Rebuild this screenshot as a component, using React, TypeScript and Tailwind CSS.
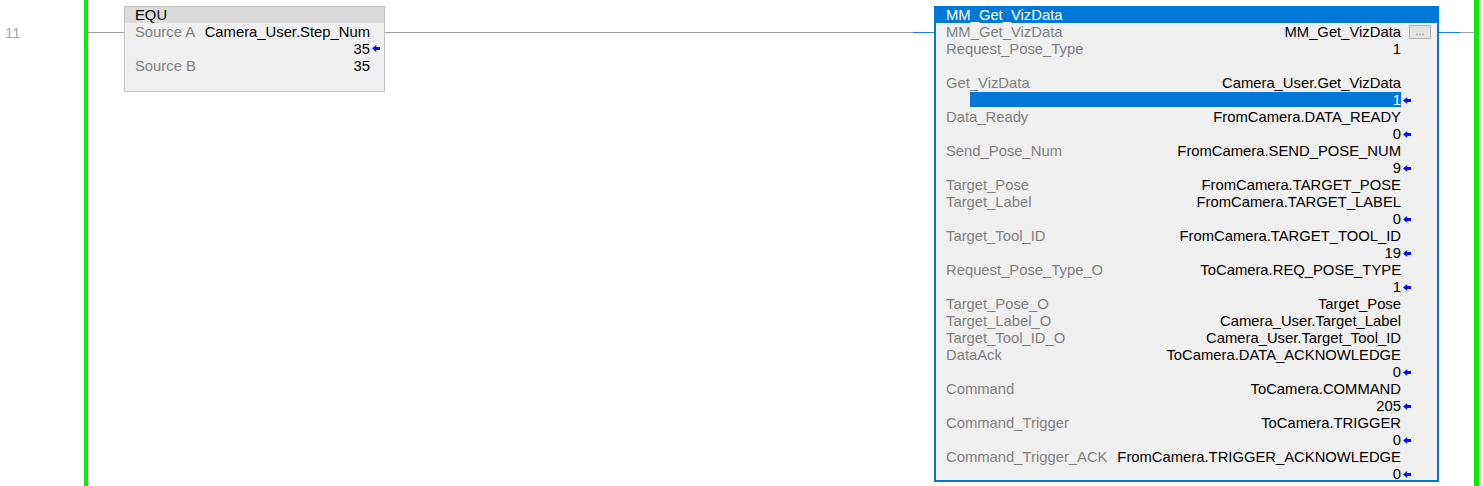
import React from "react";

type Row = { l?: string; v?: string; arrow?: boolean; btn?: boolean; sel?: boolean };

const rows: Row[] = [
  { l: "MM_Get_VizData", v: "MM_Get_VizData", btn: true },
  { l: "Request_Pose_Type", v: "1" },
  { l: "", v: "" },
  { l: "Get_VizData", v: "Camera_User.Get_VizData" },
  { v: "1", arrow: true, sel: true },
  { l: "Data_Ready", v: "FromCamera.DATA_READY" },
  { v: "0", arrow: true },
  { l: "Send_Pose_Num", v: "FromCamera.SEND_POSE_NUM" },
  { v: "9", arrow: true },
  { l: "Target_Pose", v: "FromCamera.TARGET_POSE" },
  { l: "Target_Label", v: "FromCamera.TARGET_LABEL" },
  { v: "0", arrow: true },
  { l: "Target_Tool_ID", v: "FromCamera.TARGET_TOOL_ID" },
  { v: "19", arrow: true },
  { l: "Request_Pose_Type_O", v: "ToCamera.REQ_POSE_TYPE" },
  { v: "1", arrow: true },
  { l: "Target_Pose_O", v: "Target_Pose" },
  { l: "Target_Label_O", v: "Camera_User.Target_Label" },
  { l: "Target_Tool_ID_O", v: "Camera_User.Target_Tool_ID" },
  { l: "DataAck", v: "ToCamera.DATA_ACKNOWLEDGE" },
  { v: "0", arrow: true },
  { l: "Command", v: "ToCamera.COMMAND" },
  { v: "205", arrow: true },
  { l: "Command_Trigger", v: "ToCamera.TRIGGER" },
  { v: "0", arrow: true },
  { l: "Command_Trigger_ACK", v: "FromCamera.TRIGGER_ACKNOWLEDGE" },
  { v: "0", arrow: true },
];

function Arrow() {
  return (
    <svg width="8" height="7" viewBox="0 0 8 7" className="block">
      <polygon points="0,3.5 4.2,0 4.2,7" fill="#0a0af0" />
      <rect x="3.5" y="2" width="4.5" height="3" fill="#0a0af0" />
    </svg>
  );
}

export default function App() {
  return (
    <div
      className="flex w-[1483px] h-[486px] bg-white overflow-hidden text-[14.8px] leading-[17px]"
      style={{ fontFamily: '"Liberation Sans", Arial, sans-serif' }}
    >
      {/* rung number */}
      <div className="w-[84px] shrink-0 pt-[25px] pl-[5px] text-[#a8a8a8]">11</div>
      {/* left rail */}
      <div className="w-[4px] shrink-0 h-full bg-[#00ee00]" />
      {/* wire */}
      <div className="w-[36px] shrink-0 h-px mt-[32px] bg-[#a0a0a0]" />
      {/* EQU box */}
      <div className="w-[261px] shrink-0 mt-[6px] h-[86px] border border-[#c4c4c4] bg-[#f0f0f0] self-start">
        <div className="h-[16px] leading-[16px] bg-[#dcdcdc] pl-[10px] text-black">EQU</div>
        <div className="flex h-[17px] pt-[1px] pl-[10px] pr-[14px]">
          <span className="text-[#808080] w-[71px]">Source A</span>
          <span className="flex-1 text-right text-black">Camera_User.Step_Num</span>
        </div>
        <div className="flex h-[17px] pl-[10px] items-stretch">
          <span className="flex-1 pt-[1px] text-right text-black leading-[17px]">35</span>
          <span className="w-[14px] flex items-center pl-[2px]">
            <Arrow />
          </span>
        </div>
        <div className="flex h-[17px] pt-[1px] pl-[10px] pr-[14px]">
          <span className="text-[#808080] w-[71px]">Source B</span>
          <span className="flex-1 text-right text-black">35</span>
        </div>
      </div>
      {/* wire to MM */}
      <div className="w-[528px] shrink-0 h-px mt-[32px] bg-[#a0a0a0]" />
      <div className="w-[21px] shrink-0 h-px mt-[32px] bg-[#1c7fd0]" />
      {/* MM box */}
      <div className="w-[505px] shrink-0 mt-[6px] h-[476px] border-2 border-t-0 border-[#0078d7] bg-[#f0f0f0] self-start">
        <div className="h-[17px] pt-[1px] leading-[17px] bg-[#0078d7] pl-[10px] text-white">MM_Get_VizData</div>
        {rows.map((r, i) => (
          <div key={i} className="flex h-[17px] items-stretch">
            {r.sel ? (
              <div className="flex-1 ml-[34px] my-[1px] bg-[#0078d7] text-white text-right leading-[17px]">{r.v}</div>
            ) : (
              <>
                <span className="pl-[10px] pt-[1px] text-[#808080] whitespace-nowrap">{r.l}</span>
                <span className="flex-1 pt-[1px] text-right text-black whitespace-nowrap">{r.v}</span>
              </>
            )}
            <span className="w-[36px] shrink-0 flex items-center">
              {r.arrow && (
                <span className="pl-[2px] pt-[1px]">
                  <Arrow />
                </span>
              )}
              {r.btn && (
                <span className="ml-[8px] w-[22px] h-[14px] border border-[#b4b4b4] bg-[#e2e2e2] text-[#707070] text-[11px] leading-[10px] text-center">
                  ...
                </span>
              )}
            </span>
          </div>
        ))}
      </div>
      {/* wire to right rail */}
      <div className="w-[21px] shrink-0 h-px mt-[32px] bg-[#1c7fd0]" />
      <div className="w-[14px] shrink-0 h-px mt-[32px] bg-[#a0a0a0]" />
      <div className="w-[5px] shrink-0 h-full bg-[#00ee00]" />
      <div className="flex-1" />
    </div>
  );
}
